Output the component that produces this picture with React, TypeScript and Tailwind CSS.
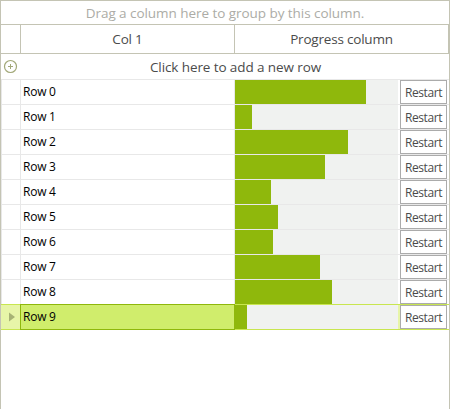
const rows = [131, 17, 113, 90, 36, 43, 38, 85, 97];

function RestartButton() {
  return (
    <button className="h-6 w-[47px] shrink-0 border border-[#ababab] bg-white text-center text-[12px] leading-[23px] tracking-[-0.4px] text-[#4b4b4b]">
      Restart
    </button>
  );
}

export default function App() {
  return (
    <div className="flex h-[409px] w-[450px] flex-col overflow-hidden border-x border-t border-[#c4c4b4] bg-white font-['Open_Sans',sans-serif] whitespace-nowrap">
      <div className="h-6 border-b border-[#c4c4b4] text-center text-[13.5px] leading-[25px] tracking-[-0.05px] text-[#acaca6]">
        <span>Drag a column here to group by this column.</span>
      </div>
      <div className="flex h-[29px] w-[448px] border-b border-r border-[#c4c4b4] text-center text-[13.5px] leading-[28px] tracking-[-0.2px] text-[#4b4b4b]">
        <div className="w-5 border-r border-[#c4c4b4]" />
        <div className="w-[214px] border-r border-[#c4c4b4]"><span>Col 1</span></div>
        <div className="flex-1"><span>Progress column</span></div>
      </div>
      <div className="relative h-[26px] border-b border-[#e8e8e8] text-center text-[13.5px] leading-[26px] tracking-[-0.1px] text-[#4b4b4b]">
        <svg className="absolute left-[2px] top-[5px]" width="15" height="15" viewBox="0 0 15 15" fill="none" stroke="#a2a878">
          <circle cx="7.5" cy="7.5" r="6" strokeWidth="1.2" />
          <path d="M5 7.5h5M7.5 5v5" />
        </svg>
        <span className="pl-[21px]">Click here to add a new row</span>
      </div>
      {rows.map((value, i) => (
        <div key={i} className="flex h-[25px] border-b border-l border-[#e8e8e8]">
          <div className="w-[18px] shrink-0" />
          <div className="w-[215px] shrink-0 border-x border-[#e8e8e8] pl-[2px] text-[12px] leading-[24px] tracking-[-0.25px] text-black">
            <span>Row {i}</span>
          </div>
          <div className="w-[163px] shrink-0 bg-[#f0f2f0]">
            <div className="h-6 bg-[#8fb80c]" style={{ width: value }} />
          </div>
          <div className="w-[2px] shrink-0" />
          <RestartButton />
        </div>
      ))}
      <div className="-mt-px flex h-[26px] border-y border-[#c8e650]">
        <div className="flex w-[19px] items-center justify-center bg-[#e7f5a8] pl-[3px]">
          <svg width="6" height="10" viewBox="0 0 6 10"><path d="M0 .5 6 5 0 9.5Z" fill="#a7b275" /></svg>
        </div>
        <div className="-my-px h-[26px] w-[215px] border border-[#8fb80c] bg-[#d0ed6c] pl-[2px] text-[12px] leading-[24px] tracking-[-0.25px] text-black">
          <span>Row 9</span>
        </div>
        <div className="w-[163px] bg-[#f0f2f0]"><div className="-ml-px h-6 w-[13px] bg-[#8fb80c]" /></div>
        <div className="w-[2px] bg-[#e7f5a8]" />
        <RestartButton />
      </div>
    </div>
  );
}
